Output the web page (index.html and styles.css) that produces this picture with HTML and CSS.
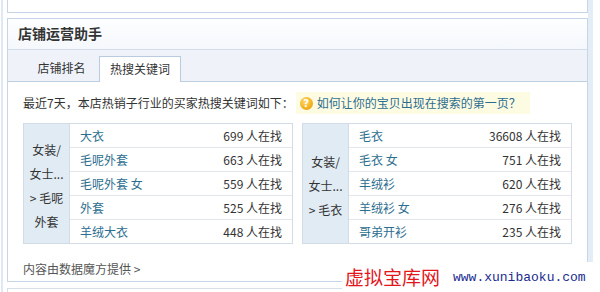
FILE: index.html
```html
<!DOCTYPE html>
<html lang="zh-CN">
<head>
<meta charset="utf-8">
<title>店铺运营助手</title>
<link rel="stylesheet" href="styles.css">
</head>
<body>
<div class="frame">
  <div class="panel-prev"></div>
  <div class="panel">
    <div class="panel-head">店铺运营助手</div>
    <div class="tabs">
      <div class="tab">店铺排名</div>
      <div class="tab tab-active">热搜关键词</div>
    </div>
    <div class="panel-body">
      <div class="intro">
        <span class="intro-text">最近7天，本店热销子行业的买家热搜关键词如下：</span>
        <a class="tip" href="#"><span class="tip-icon">?</span>如何让你的宝贝出现在搜索的第一页？</a>
      </div>
      <div class="tables">
        <div class="kw-table">
          <div class="cat"><span>女装/</span><span>女士...</span><span>&gt; 毛呢</span><span>外套</span></div>
          <div class="rows">
            <div class="row"><a class="kw" href="#">大衣</a><span class="num">699 人在找</span></div>
            <div class="row"><a class="kw" href="#">毛呢外套</a><span class="num">663 人在找</span></div>
            <div class="row"><a class="kw" href="#">毛呢外套 女</a><span class="num">559 人在找</span></div>
            <div class="row"><a class="kw" href="#">外套</a><span class="num">525 人在找</span></div>
            <div class="row"><a class="kw" href="#">羊绒大衣</a><span class="num">448 人在找</span></div>
          </div>
        </div>
        <div class="kw-table">
          <div class="cat"><span>女装/</span><span>女士...</span><span>&gt; 毛衣</span></div>
          <div class="rows">
            <div class="row"><a class="kw" href="#">毛衣</a><span class="num">36608 人在找</span></div>
            <div class="row"><a class="kw" href="#">毛衣 女</a><span class="num">751 人在找</span></div>
            <div class="row"><a class="kw" href="#">羊绒衫</a><span class="num">620 人在找</span></div>
            <div class="row"><a class="kw" href="#">羊绒衫 女</a><span class="num">276 人在找</span></div>
            <div class="row"><a class="kw" href="#">哥弟开衫</a><span class="num">235 人在找</span></div>
          </div>
        </div>
      </div>
      <div class="source">内容由数据魔方提供 &gt;</div>
    </div>
  </div>
  <div class="panel-next"></div>
</div>
<div class="watermark"><span class="wm-cn">虚拟宝库网</span><span class="wm-url">www.xunibaoku.com</span></div>
</body>
</html>
```
FILE: styles.css
```css
* { box-sizing: border-box; }
html, body { margin: 0; padding: 0; background: #fff; }
body {
  width: 600px;
  height: 292px;
  overflow: hidden;
  position: relative;
  font-family: "Noto Sans CJK SC", "Noto Sans", sans-serif;
  font-size: 12px;
  color: #333;
}
a { text-decoration: none; }

.frame {
  margin-left: 1px;
  width: 592px;
  height: 292px;
  overflow: hidden;
  border-left: 2px solid #dfe8f3;
  border-right: 5px solid #e4ecf6;
  padding-left: 4px;
}

.panel-prev {
  height: 13px;
  border: 1px solid #c6d5e7;
  border-top: none;
  margin-bottom: 5px;
}

.panel {
  border: 1px solid #c6d5e7;
}

.panel-head {
  height: 31px;
  line-height: 29px;
  padding-left: 10px;
  font-size: 14px;
  font-weight: bold;
  color: #333;
  background: linear-gradient(#fdfeff, #f5f8fc);
  border-bottom: 1px solid #d2ddea;
}

.tabs {
  height: 32px;
  display: flex;
  align-items: flex-end;
  padding-left: 16px;
  background: #eff3f9;
  border-bottom: 1px solid #bfcfe2;
}
.tab {
  width: 75px;
  height: 26px;
  line-height: 24px;
  text-align: center;
  color: #333;
  margin-bottom: -1px;
}
.tab-active {
  width: 82px;
  background: #fff;
  border: 1px solid #b9cbe0;
  border-bottom: none;
}

.panel-body {
  padding: 10px 15px 3px 15px;
}

.intro {
  display: flex;
  align-items: center;
  height: 22px;
  line-height: 22px;
}
.intro-text { color: #333; }
.tip {
  display: flex;
  align-items: center;
  height: 22px;
  margin-left: 2px;
  padding: 0 9px 0 4px;
  background: #fefbe3;
  color: #2c6e8f;
}
.tip-icon {
  width: 13px;
  height: 13px;
  border-radius: 50%;
  margin-right: 4px;
  background: radial-gradient(circle at 40% 35%, #ffd968, #f0a915 70%, #d98a06);
  color: #fff;
  font-family: "DejaVu Sans", sans-serif;
  font-size: 10px;
  font-weight: bold;
  line-height: 13px;
  text-align: center;
}

.tables {
  display: flex;
  gap: 9px;
  margin-top: 9px;
}
.kw-table {
  width: 270px;
  display: flex;
  border: 1px solid #d3dce6;
}
.cat {
  width: 46px;
  background: #e1ebf4;
  border-right: 1px solid #d3dce6;
  display: flex;
  flex-direction: column;
  justify-content: center;
  align-items: center;
  padding-top: 5px;
  line-height: 24px;
  color: #333;
}
.rows { flex: 1; }
.row {
  height: 24px;
  display: flex;
  align-items: center;
  justify-content: space-between;
  padding: 0 10px 0 10px;
  border-bottom: 1px solid #e2e7ed;
}
.row:last-child { border-bottom: none; height: 23px; }
.kw { color: #2c6e8f; }
.num { color: #333; }

.source {
  margin-top: 16px;
  line-height: 18px;
  color: #555;
}

.panel-next {
  margin-top: 6px;
  height: 6px;
  border: 1px solid #d6e0ec;
  border-bottom: none;
}

.watermark {
  position: absolute;
  left: 342px;
  top: 262px;
  width: 254px;
  height: 30px;
  background: #fff;
  display: flex;
  align-items: center;
  padding-left: 3px;
}
.wm-cn {
  color: #e3161c;
  font-size: 19px;
  line-height: 26px;
}
.wm-url {
  margin-left: 13px;
  color: #1a2b8f;
  font-family: "Liberation Mono", monospace;
  font-size: 13px;
}
```
